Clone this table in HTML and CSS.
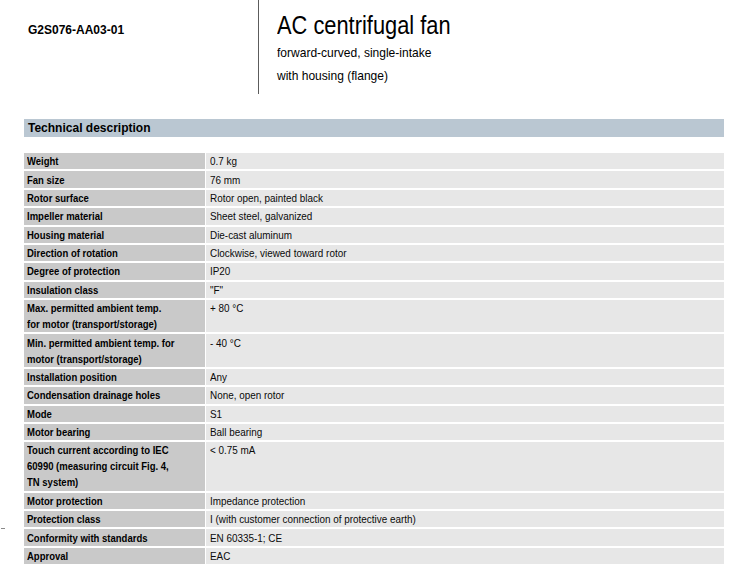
FILE: index.html
```html
<!DOCTYPE html>
<html lang="en">
<head>
<meta charset="utf-8">
<title>G2S076-AA03-01</title>
<link rel="stylesheet" href="styles.css">
</head>
<body>
<div class="page">
  <header class="top">
    <div class="top-left"><span class="product-id">G2S076-AA03-01</span></div>
    <div class="top-right">
      <h1 class="title"><span class="sq-title">AC centrifugal fan</span></h1>
      <p class="subtitle"><span class="sq-sub">forward-curved, single-intake</span><br><span class="sq-sub">with housing (flange)</span></p>
    </div>
  </header>

  <h2 class="section-bar">Technical description</h2>

  <div class="spec">
    <div class="lbl"><span class="sq-l">Weight</span></div><div class="val"><span class="sq-v">0.7 kg</span></div>
    <div class="lbl"><span class="sq-l">Fan size</span></div><div class="val"><span class="sq-v">76 mm</span></div>
    <div class="lbl"><span class="sq-l">Rotor surface</span></div><div class="val"><span class="sq-v">Rotor open, painted black</span></div>
    <div class="lbl"><span class="sq-l">Impeller material</span></div><div class="val"><span class="sq-v">Sheet steel, galvanized</span></div>
    <div class="lbl"><span class="sq-l">Housing material</span></div><div class="val"><span class="sq-v">Die-cast aluminum</span></div>
    <div class="lbl"><span class="sq-l">Direction of rotation</span></div><div class="val"><span class="sq-v">Clockwise, viewed toward rotor</span></div>
    <div class="lbl"><span class="sq-l">Degree of protection</span></div><div class="val"><span class="sq-v">IP20</span></div>
    <div class="lbl"><span class="sq-l">Insulation class</span></div><div class="val"><span class="sq-v">"F"</span></div>
    <div class="lbl"><span class="sq-l">Max. permitted ambient temp.<br>for motor (transport/storage)</span></div><div class="val"><span class="sq-v">+ 80 °C</span></div>
    <div class="lbl"><span class="sq-l">Min. permitted ambient temp. for<br>motor (transport/storage)</span></div><div class="val"><span class="sq-v">- 40 °C</span></div>
    <div class="lbl"><span class="sq-l">Installation position</span></div><div class="val"><span class="sq-v">Any</span></div>
    <div class="lbl"><span class="sq-l">Condensation drainage holes</span></div><div class="val"><span class="sq-v">None, open rotor</span></div>
    <div class="lbl"><span class="sq-l">Mode</span></div><div class="val"><span class="sq-v">S1</span></div>
    <div class="lbl"><span class="sq-l">Motor bearing</span></div><div class="val"><span class="sq-v">Ball bearing</span></div>
    <div class="lbl"><span class="sq-l">Touch current according to IEC<br>60990 (measuring circuit Fig. 4,<br>TN system)</span></div><div class="val"><span class="sq-v">&lt; 0.75 mA</span></div>
    <div class="lbl"><span class="sq-l">Motor protection</span></div><div class="val"><span class="sq-v">Impedance protection</span></div>
    <div class="lbl"><span class="sq-l">Protection class</span></div><div class="val"><span class="sq-v">I (with customer connection of protective earth)</span></div>
    <div class="lbl"><span class="sq-l">Conformity with standards</span></div><div class="val"><span class="sq-v">EN 60335-1; CE</span></div>
    <div class="lbl"><span class="sq-l">Approval</span></div><div class="val"><span class="sq-v">EAC</span></div>
  </div>

  <span class="margin-mark"></span>
</div>
</body>
</html>
```

FILE: styles.css
```css
* { box-sizing: border-box; }

html, body {
  margin: 0;
  padding: 0;
  background: #ffffff;
}

body {
  font-family: "Liberation Sans", Arial, sans-serif;
  color: #000;
}

.page {
  position: relative;
  width: 748px;
  min-height: 582px;
}

/* ---------- top header ---------- */
.top {
  display: flex;
  height: 94px;
}

.top-left {
  width: 259px;
  padding: 23px 0 0 28px;
  border-right: 1px solid #5c5c5c;
}

.product-id {
  font-weight: bold;
  font-size: 12px;
  line-height: 14px;
  display: block;
}

.top-right {
  padding-left: 18px;
}

.title {
  margin: 10px 0 1px;
  font-weight: normal;
  font-size: 26px;
  line-height: 30px;
  white-space: nowrap;
}

.sq-title {
  display: inline-block;
  transform: scaleX(0.84);
  transform-origin: 0 50%;
}

.subtitle {
  margin: 0;
  font-size: 13px;
  line-height: 23px;
  white-space: nowrap;
}

.sq-sub {
  display: inline-block;
  transform: scaleX(0.925);
  transform-origin: 0 50%;
}

/* ---------- section bar ---------- */
.section-bar {
  margin: 25px 0 0 24px;
  width: 700px;
  height: 18px;
  padding-left: 4px;
  background: #bac7d2;
  font-size: 12px;
  font-weight: bold;
  line-height: 18px;
}

/* ---------- spec table ---------- */
.spec {
  margin: 16px 0 0 24px;
  width: 700px;
  display: grid;
  grid-template-columns: 180.5px 1fr;
  column-gap: 1.5px;
  row-gap: 2px;
  font-size: 11px;
  line-height: 16px;
}

.lbl,
.val {
  padding: 0.2px 0;
  white-space: nowrap;
}

.lbl {
  background: #c9c9c9;
  font-weight: bold;
  padding-left: 3px;
}

.val {
  background: #e7e7e7;
  padding-left: 4px;
  color: #0a0a0a;
}

.sq-l {
  display: inline-block;
  transform: scaleX(0.865);
  transform-origin: 0 50%;
}

.sq-v {
  display: inline-block;
  transform: scaleX(0.9);
  transform-origin: 0 50%;
}

.margin-mark {
  position: absolute;
  left: 1px;
  top: 528px;
  width: 4px;
  height: 1px;
  background: #8a8a8a;
}
```
